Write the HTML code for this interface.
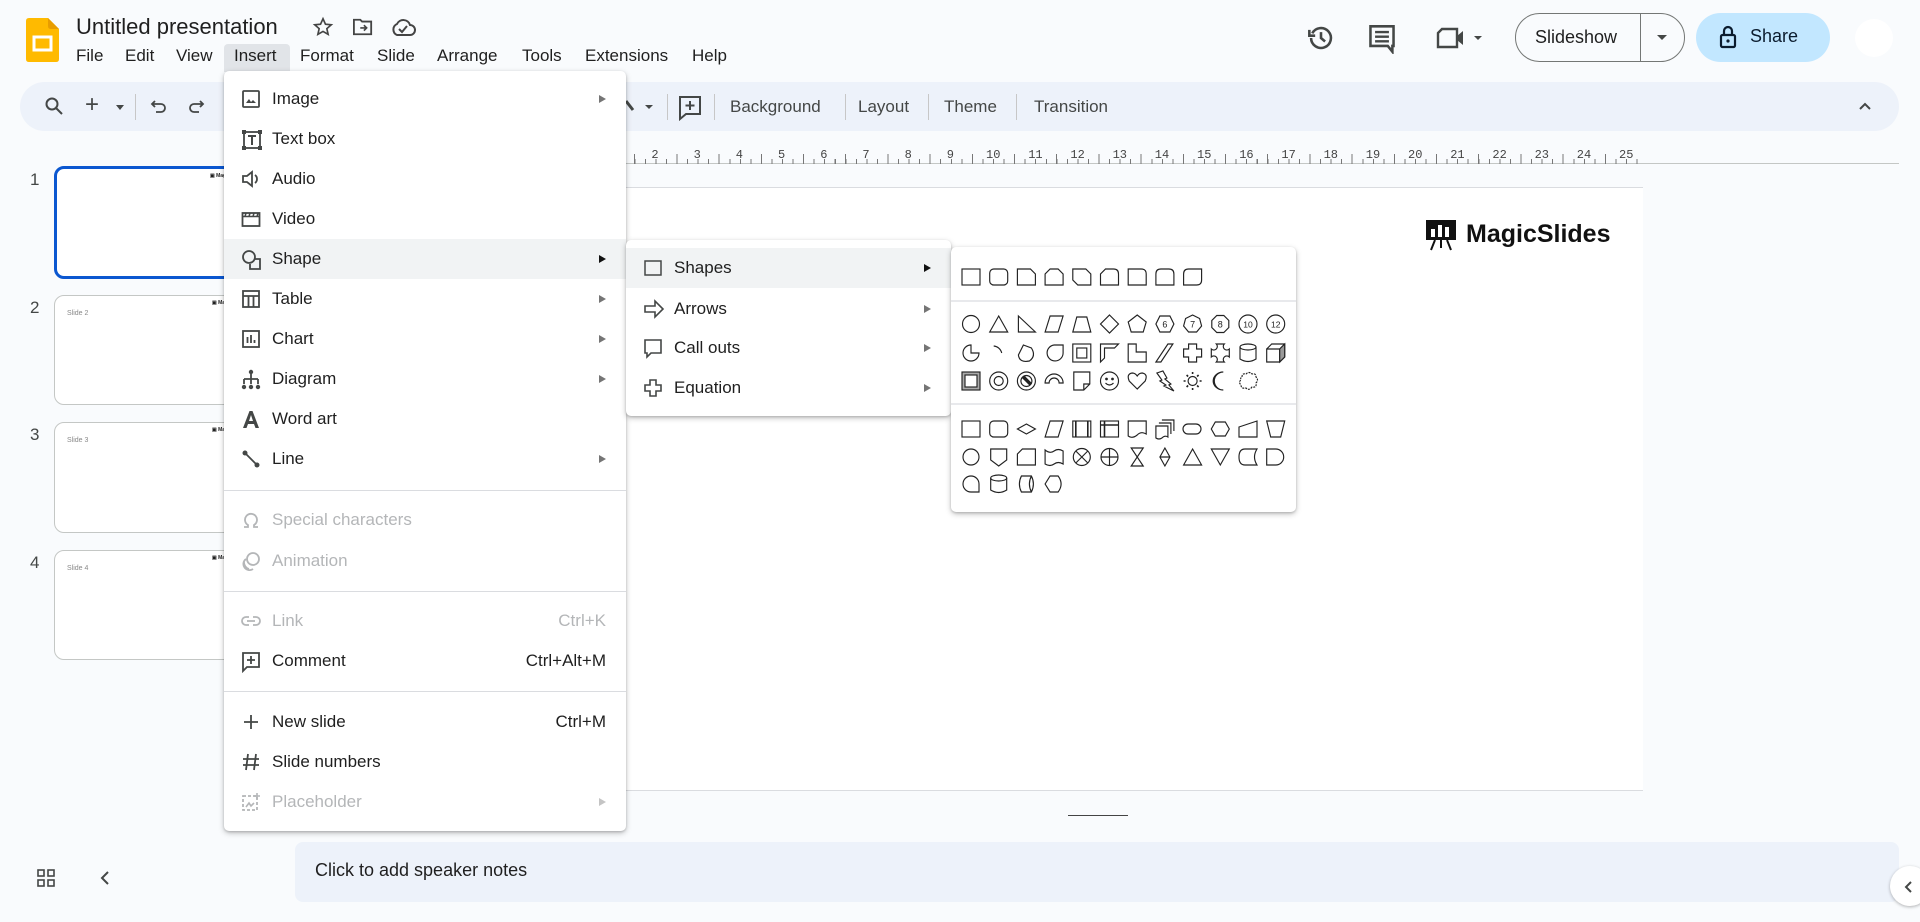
<!DOCTYPE html>
<html><head><meta charset="utf-8">
<style>
*{margin:0;padding:0;box-sizing:border-box}
body{width:1920px;height:922px;background:#f9fbfd;font-family:"Liberation Sans",sans-serif;color:#1f1f1f;position:relative;overflow:hidden}
.a{position:absolute}
.mb{position:absolute;top:46px;font-size:17px;color:#1f1f1f}
.tb{position:absolute;top:97px;font-size:17px;color:#444746}
.sep{position:absolute;top:94px;width:1px;height:26px;background:#c7c7c7}
.menu{position:absolute;background:#fff;border-radius:5px;box-shadow:0 2px 6px rgba(0,0,0,.25),0 1px 2px rgba(0,0,0,.15)}
.it{position:absolute;left:0;right:0;height:40px;font-size:17px;line-height:40px}
.it .t{position:absolute;left:48px}
.it svg{position:absolute;left:17px;top:10px}
.it .ar{position:absolute;right:20px;top:16px;width:0;height:0;border-top:4px solid transparent;border-bottom:4px solid transparent;border-left:7px solid #757575}
.it .sc{position:absolute;right:20px;font-size:17px}
.dis{color:#b4b6b8}
.hr{position:absolute;left:0;right:0;height:1px;background:#dadce0}
.th{position:absolute;left:54px;width:200px;background:#fff;border:1px solid #c4c7c5;border-radius:10px}
.num{position:absolute;left:30px;font-size:17px;color:#444746}
.tl{position:absolute;font-size:7px;color:#888;left:12px;top:14px}
.ml{position:absolute;right:6px;top:4px;font-size:5px;font-weight:bold}
</style></head><body>

<svg class="a" style="left:26px;top:18px" width="33" height="44" viewBox="0 0 33 44"><path d="M3 0H22L33 11V41Q33 44 30 44H3Q0 44 0 41V3Q0 0 3 0Z" fill="#ffba00"/><path d="M22 0L33 11H25Q22 11 22 8Z" fill="#e89d00"/><rect x="8" y="19" width="17" height="13" fill="none" stroke="#fff" stroke-width="3"/></svg>
<div class="a" style="left:76px;top:14px;font-size:22px;color:#1f1f1f">Untitled presentation</div>
<svg class="a" style="left:312px;top:16px" width="22" height="22" viewBox="0 0 24 24"><path d="M12 3l2.7 6 6.3.6-4.8 4.2 1.4 6.2L12 16.8 6.4 20l1.4-6.2L3 9.6 9.3 9z" fill="none" stroke="#444" stroke-width="1.8"/></svg>
<svg class="a" style="left:352px;top:17px" width="22" height="20" viewBox="0 0 24 22"><path d="M2 3h7l2 2h10v14H2z" fill="none" stroke="#444" stroke-width="2"/><path d="M9 12h7M13 9l3 3-3 3" stroke="#444" stroke-width="1.8" fill="none"/></svg>
<svg class="a" style="left:390px;top:16px" width="26" height="22" viewBox="0 0 26 22"><path d="M7 19h13a5 5 0 0 0 0-10 7 7 0 0 0-13-1 6 6 0 0 0 0 11z" fill="none" stroke="#444" stroke-width="2"/><path d="M9 13l3 3 5-6" stroke="#444" stroke-width="2" fill="none"/></svg>

<div class="a" style="left:224px;top:44px;width:66px;height:28px;background:#e1e4e8;border-radius:4px 4px 0 0"></div>
<div class="mb" style="left:76px">File</div><div class="mb" style="left:125px">Edit</div><div class="mb" style="left:176px">View</div><div class="mb" style="left:234px">Insert</div><div class="mb" style="left:300px">Format</div><div class="mb" style="left:377px">Slide</div><div class="mb" style="left:437px">Arrange</div><div class="mb" style="left:522px">Tools</div><div class="mb" style="left:585px">Extensions</div><div class="mb" style="left:692px">Help</div>

<svg class="a" style="left:1307px;top:24px" width="28" height="28" viewBox="0 0 24 24"><path d="M4.5 8A8.5 8.5 0 1 1 3.5 12" fill="none" stroke="#444746" stroke-width="2.2"/><path d="M2 5v5h5" fill="none" stroke="#444746" stroke-width="2.2"/><path d="M12 7v5l3.5 3" fill="none" stroke="#444746" stroke-width="2.2"/></svg>
<svg class="a" style="left:1368px;top:24px" width="28" height="30" viewBox="0 0 24 26"><path d="M2 2h20v17h-1v5l-4-5H2z" fill="none" stroke="#444746" stroke-width="2.2"/><path d="M6 7h12M6 11h12M6 15h12" stroke="#444746" stroke-width="2"/></svg>
<svg class="a" style="left:1436px;top:26px" width="48" height="24" viewBox="0 0 48 24"><path d="M6 3h15v18H2V7z" fill="none" stroke="#444746" stroke-width="2.4"/><path d="M21 10l6-5v14l-6-5z" fill="#444746"/><path d="M38 10h8l-4 4z" fill="#444746"/></svg>
<div class="a" style="left:1515px;top:13px;width:170px;height:49px;border:1px solid #747775;border-radius:25px"></div>
<div class="a" style="left:1640px;top:13px;width:1px;height:49px;background:#747775"></div>
<div class="a" style="left:1535px;top:27px;font-size:18px;color:#1f1f1f">Slideshow</div>
<div class="a" style="left:1657px;top:35px;border-left:5px solid transparent;border-right:5px solid transparent;border-top:5px solid #444746"></div>
<div class="a" style="left:1696px;top:13px;width:134px;height:49px;background:#c2e7ff;border-radius:25px"></div>
<svg class="a" style="left:1719px;top:25px" width="18" height="24" viewBox="0 0 18 24"><rect x="2" y="10" width="14" height="12" rx="1.5" fill="none" stroke="#0b1c2e" stroke-width="2.2"/><path d="M5 10V6a4 4 0 0 1 8 0v4" fill="none" stroke="#0b1c2e" stroke-width="2.2"/><circle cx="9" cy="16" r="1.6" fill="#0b1c2e"/></svg>
<div class="a" style="left:1750px;top:26px;font-size:18px;color:#0b1c2e">Share</div>
<div class="a" style="left:1855px;top:19px;width:38px;height:38px;border-radius:50%;background:#fff"></div>

<div class="a" style="left:20px;top:82px;width:1879px;height:49px;background:#edf2fa;border-radius:25px"></div>
<svg class="a" style="left:44px;top:96px" width="20" height="20" viewBox="0 0 20 20"><circle cx="8" cy="8" r="5.5" fill="none" stroke="#444746" stroke-width="2"/><path d="M12 12l6 6" stroke="#444746" stroke-width="2"/></svg>
<div class="a" style="left:85px;top:91px;font-size:24px;color:#444746">+</div>
<div class="a" style="left:116px;top:105px;border-left:4px solid transparent;border-right:4px solid transparent;border-top:5px solid #444746"></div>
<div class="sep" style="left:135px"></div>
<svg class="a" style="left:150px;top:98px" width="18" height="18" viewBox="0 0 18 18"><path d="M5 3L2 6l3 3M2 6h9a4 4 0 0 1 0 8H6" fill="none" stroke="#444746" stroke-width="1.8"/></svg>
<svg class="a" style="left:187px;top:98px" width="18" height="18" viewBox="0 0 18 18"><path d="M13 3l3 3-3 3M16 6H7a4 4 0 0 0 0 8h5" fill="none" stroke="#444746" stroke-width="1.8"/></svg>
<svg class="a" style="left:620px;top:97px" width="40" height="20" viewBox="0 0 40 20"><path d="M6 4l7 9" stroke="#444746" stroke-width="3"/><path d="M25 8h8l-4 4z" fill="#444746"/></svg>
<div class="sep" style="left:667px"></div>
<svg class="a" style="left:678px;top:95px" width="24" height="26" viewBox="0 0 24 26"><path d="M2 2h20v17H8l-6 5z" fill="none" stroke="#444746" stroke-width="2"/><path d="M12 6v9M7.5 10.5h9" stroke="#444746" stroke-width="2"/></svg>
<div class="sep" style="left:714px"></div>
<div class="tb" style="left:730px">Background</div>
<div class="sep" style="left:845px"></div>
<div class="tb" style="left:858px">Layout</div>
<div class="sep" style="left:928px"></div>
<div class="tb" style="left:944px">Theme</div>
<div class="sep" style="left:1016px"></div>
<div class="tb" style="left:1034px">Transition</div>
<svg class="a" style="left:1857px;top:100px" width="16" height="12" viewBox="0 0 16 12"><path d="M3 9l5-5 5 5" fill="none" stroke="#444746" stroke-width="2"/></svg>

<div class="a" style="left:571px;top:163px;width:1328px;height:1px;background:#c4c7c5"></div>
<div class="a" style="left:571px;top:159px;width:1072px;height:5px;background:repeating-linear-gradient(90deg,#777 0 1px,transparent 1px 10.55px)"></div>
<div class="a" style="left:592px;top:154px;width:1051px;height:10px;background:repeating-linear-gradient(90deg,#777 0 1px,transparent 1px 42.2px)"></div>
<div class="a" style="left:571px;top:148px;width:1080px;height:14px;font-family:'Liberation Mono',monospace;font-size:12px;color:#444">
<script>
for(let n=1;n<=25;n++){document.write('<span style="position:absolute;left:'+(n*42.2-4-(n>9?3:0))+'px;top:0">'+n+'</span>')}
</script>
</div>

<div class="a" style="left:571px;top:187px;width:1072px;height:604px;background:#fff;border-top:1px solid #dadce0;border-bottom:1px solid #dadce0"></div>
<svg class="a" style="left:1425px;top:218px" width="32" height="33" viewBox="0 0 32 33"><rect x="1" y="2" width="30" height="20" fill="#111"/><rect x="6" y="11" width="4" height="8" fill="#fff"/><rect x="13" y="7" width="4" height="12" fill="#fff"/><rect x="20" y="9" width="4" height="10" fill="#fff"/><path d="M10 22l-4 10M22 22l4 10M16 22v8" stroke="#111" stroke-width="2"/></svg>
<div class="a" style="left:1466px;top:220px;font-size:25px;font-weight:bold;color:#111">MagicSlides</div>
<div class="a" style="left:1068px;top:815px;width:60px;height:1px;background:#444"></div>

<div class="num" style="top:170px">1</div>
<div class="th" style="top:166px;height:113px;border:3px solid #0b57d0"><div class="ml">▣ MagicSlides</div></div>
<div class="num" style="top:298px">2</div>
<div class="th" style="top:295px;height:110px"><div class="ml">▣ MagicSlides</div><div class="tl">Slide 2</div></div>
<div class="num" style="top:425px">3</div>
<div class="th" style="top:422px;height:111px"><div class="ml">▣ MagicSlides</div><div class="tl">Slide 3</div></div>
<div class="num" style="top:553px">4</div>
<div class="th" style="top:550px;height:110px"><div class="ml">▣ MagicSlides</div><div class="tl">Slide 4</div></div>

<div class="a" style="left:295px;top:842px;width:1604px;height:60px;background:#edf2fa;border-radius:8px"></div>
<div class="a" style="left:315px;top:860px;font-size:18px;color:#1f1f1f">Click to add speaker notes</div>
<svg class="a" style="left:36px;top:868px" width="20" height="20" viewBox="0 0 20 20" fill="none" stroke="#444746" stroke-width="1.6"><rect x="2" y="2" width="6" height="6"/><rect x="12" y="2" width="6" height="6"/><rect x="2" y="12" width="6" height="6"/><rect x="12" y="12" width="6" height="6"/></svg>
<svg class="a" style="left:98px;top:870px" width="14" height="16" viewBox="0 0 14 16"><path d="M10 2L4 8l6 6" fill="none" stroke="#444746" stroke-width="2"/></svg>
<div class="a" style="left:1890px;top:866px;width:40px;height:40px;border-radius:50%;background:#fff;box-shadow:0 1px 3px rgba(0,0,0,.3)"></div>
<svg class="a" style="left:1903px;top:880px" width="12" height="14" viewBox="0 0 12 14"><path d="M8 2L3 7l5 5" fill="none" stroke="#444746" stroke-width="2"/></svg>

<div class="menu" style="left:224px;top:71px;width:402px;height:760px">
 <div class="it" style="top:8px"><svg width="20" height="20" viewBox="0 0 20 20"><rect x="2" y="2" width="16" height="16" rx="1" fill="none" stroke="#444746" stroke-width="1.8"/><path d="M5 14l3-4 2 3 2-2 3 3z" fill="#444746"/></svg><span class="t">Image</span><span class="ar"></span></div>
 <div class="it" style="top:48px"><svg width="22" height="22" viewBox="0 0 22 22"><rect x="3" y="3" width="16" height="16" fill="none" stroke="#444746" stroke-width="1.8"/><rect x="1" y="1" width="4" height="4" fill="#444746"/><rect x="17" y="1" width="4" height="4" fill="#444746"/><rect x="1" y="17" width="4" height="4" fill="#444746"/><rect x="17" y="17" width="4" height="4" fill="#444746"/><path d="M7 7h8M11 7v9" stroke="#444746" stroke-width="2"/></svg><span class="t">Text box</span></div>
 <div class="it" style="top:88px"><svg width="20" height="20" viewBox="0 0 20 20"><path d="M2 7h4l5-4v14l-5-4H2z" fill="none" stroke="#444746" stroke-width="1.8"/><path d="M14 6a5 5 0 0 1 0 8" fill="none" stroke="#444746" stroke-width="1.8"/></svg><span class="t">Audio</span></div>
 <div class="it" style="top:128px"><svg width="20" height="20" viewBox="0 0 20 20"><rect x="1.5" y="4" width="17" height="13" fill="none" stroke="#444746" stroke-width="1.8"/><path d="M1.5 7.5h17M5 4l-1 3.5M9 4l-1 3.5M13 4l-1 3.5M17 4l-1 3.5" stroke="#444746" stroke-width="1.5"/></svg><span class="t">Video</span></div>
 <div class="it" style="top:168px;background:#f1f3f4"><svg width="22" height="22" viewBox="0 0 22 22"><circle cx="8" cy="8" r="6" fill="none" stroke="#444746" stroke-width="1.8"/><path d="M13 10h6v10H9v-5" fill="none" stroke="#444746" stroke-width="1.8"/></svg><span class="t">Shape</span><span class="ar" style="border-left-color:#111"></span></div>
 <div class="it" style="top:208px"><svg width="20" height="20" viewBox="0 0 20 20"><rect x="2" y="2" width="16" height="16" fill="none" stroke="#444746" stroke-width="1.8"/><path d="M2 7h16M7.5 7v11M12.5 7v11" stroke="#444746" stroke-width="1.8"/></svg><span class="t">Table</span><span class="ar"></span></div>
 <div class="it" style="top:248px"><svg width="20" height="20" viewBox="0 0 20 20"><rect x="2" y="2" width="16" height="16" fill="none" stroke="#444746" stroke-width="1.8"/><path d="M6.5 14V8M10 14V6M13.5 14v-3" stroke="#444746" stroke-width="1.8"/></svg><span class="t">Chart</span><span class="ar"></span></div>
 <div class="it" style="top:288px"><svg width="20" height="22" viewBox="0 0 20 22"><circle cx="10" cy="3" r="2.2" fill="#444746"/><path d="M10 5v5M3 10h14M3 10v5M10 10v5M17 10v5" stroke="#444746" stroke-width="1.8" fill="none"/><circle cx="3" cy="18" r="2.2" fill="#444746"/><circle cx="10" cy="18" r="2.2" fill="#444746"/><circle cx="17" cy="18" r="2.2" fill="#444746"/></svg><span class="t">Diagram</span><span class="ar"></span></div>
 <div class="it" style="top:328px"><svg width="20" height="20" viewBox="0 0 20 20"><path d="M2 19L8.5 2h3L18 19h-3.5l-1.5-4H7l-1.5 4z M8 12h4l-2-6z" fill="#444746" fill-rule="evenodd"/></svg><span class="t">Word art</span></div>
 <div class="it" style="top:368px"><svg width="20" height="20" viewBox="0 0 20 20"><path d="M4 4l12 12" stroke="#444746" stroke-width="1.8"/><circle cx="4" cy="4" r="2.5" fill="#444746"/><circle cx="16" cy="16" r="2.5" fill="#444746"/></svg><span class="t">Line</span><span class="ar"></span></div>
 <div class="hr" style="top:419px"></div>
 <div class="it dis" style="top:429px"><svg width="20" height="20" viewBox="0 0 20 20"><path d="M3 17h4v-2a6 6 0 1 1 6 0v2h4" fill="none" stroke="#b4b6b8" stroke-width="1.8"/></svg><span class="t">Special characters</span></div>
 <div class="it dis" style="top:470px"><svg width="20" height="20" viewBox="0 0 20 20"><circle cx="12" cy="8" r="6" fill="none" stroke="#b4b6b8" stroke-width="1.8"/><path d="M5 8a6 6 0 0 0 7 10M3 11a7 7 0 0 0 5 7" fill="none" stroke="#b4b6b8" stroke-width="1.8"/></svg><span class="t">Animation</span></div>
 <div class="hr" style="top:520px"></div>
 <div class="it dis" style="top:530px"><svg width="20" height="20" viewBox="0 0 20 20"><path d="M8 6H5a4 4 0 0 0 0 8h3M12 6h3a4 4 0 0 1 0 8h-3M6 10h8" fill="none" stroke="#b4b6b8" stroke-width="1.8"/></svg><span class="t">Link</span><span class="sc">Ctrl+K</span></div>
 <div class="it" style="top:570px"><svg width="20" height="22" viewBox="0 0 20 22"><path d="M2 2h16v14H6l-4 4z" fill="none" stroke="#444746" stroke-width="1.8"/><path d="M10 5v8M6 9h8" stroke="#444746" stroke-width="1.8"/></svg><span class="t">Comment</span><span class="sc">Ctrl+Alt+M</span></div>
 <div class="hr" style="top:620px"></div>
 <div class="it" style="top:631px"><svg width="20" height="20" viewBox="0 0 20 20"><path d="M10 3v14M3 10h14" stroke="#444746" stroke-width="1.8"/></svg><span class="t">New slide</span><span class="sc">Ctrl+M</span></div>
 <div class="it" style="top:671px"><svg width="20" height="20" viewBox="0 0 20 20"><path d="M7 2L5 18M15 2l-2 16M2 7h16M2 13h16" stroke="#444746" stroke-width="1.8"/></svg><span class="t">Slide numbers</span></div>
 <div class="it dis" style="top:711px"><svg width="20" height="20" viewBox="0 0 20 20"><rect x="2" y="4" width="14" height="14" fill="none" stroke="#b4b6b8" stroke-width="1.8" stroke-dasharray="3 2"/><path d="M5 15l3-4 2 3 3-3" stroke="#b4b6b8" stroke-width="1.6" fill="none"/><path d="M16 1v6M13 4h6" stroke="#b4b6b8" stroke-width="1.6"/></svg><span class="t">Placeholder</span><span class="ar" style="border-left-color:#c4c4c4"></span></div>
</div>

<div class="menu" style="left:626px;top:240px;width:325px;height:176px">
 <div class="it" style="top:8px;background:#f1f3f4"><svg width="20" height="20" viewBox="0 0 20 20"><rect x="2" y="3" width="16" height="14" fill="none" stroke="#444746" stroke-width="1.5"/></svg><span class="t">Shapes</span><span class="ar" style="border-left-color:#111"></span></div>
 <div class="it" style="top:49px"><svg width="22" height="20" viewBox="0 0 22 20"><path d="M2 7h10V2l8 8-8 8v-5H2z" fill="none" stroke="#444746" stroke-width="1.6"/></svg><span class="t">Arrows</span><span class="ar"></span></div>
 <div class="it" style="top:88px"><svg width="20" height="22" viewBox="0 0 20 22"><path d="M2 2h16v13H8l-4 4v-4H2z" fill="none" stroke="#444746" stroke-width="1.6"/></svg><span class="t">Call outs</span><span class="ar"></span></div>
 <div class="it" style="top:128px"><svg width="20" height="20" viewBox="0 0 20 20"><path d="M7 2h6v5h5v6h-5v5H7v-5H2V7h5z" fill="none" stroke="#444746" stroke-width="1.6"/></svg><span class="t">Equation</span><span class="ar"></span></div>
</div>

<div class="menu" style="left:951px;top:247px;width:345px;height:265px"></div>
<svg class="a" style="left:951px;top:247px" width="345" height="265" viewBox="0 0 345 265">
<g fill="none" stroke="#222" stroke-width="1.15">
<line x1="0" y1="54" x2="345" y2="54" stroke="#dadce0"/>
<line x1="0" y1="157" x2="345" y2="157" stroke="#dadce0"/>
<g transform="translate(9,19)">
<rect x="2" y="3" width="18" height="16"/>
<rect x="29.7" y="3" width="18" height="16" rx="4"/>
<path transform="translate(55.4,0)" d="M2 3H15L20 8V19H2Z"/>
<path transform="translate(83.1,0)" d="M7 3H15L20 8V19H2V8Z"/>
<path transform="translate(110.8,0)" d="M2 3H15L20 8V19H7L2 14Z"/>
<path transform="translate(138.5,0)" d="M7 3H15Q20 3 20 8V19H2V8Z"/>
<path transform="translate(166.2,0)" d="M2 3H15Q20 3 20 8V19H2Z"/>
<path transform="translate(193.9,0)" d="M7 3H15Q20 3 20 8V19H2V8Q2 3 7 3Z"/>
<path transform="translate(221.6,0)" d="M7 3H20V14Q20 19 15 19H2V8Q2 3 7 3Z"/>
</g>
<g transform="translate(9,66)">
<circle cx="11" cy="11" r="8.5"/>
<path transform="translate(27.7,0)" d="M11 3L20 19H2Z"/>
<path transform="translate(55.4,0)" d="M3 3L20 19H3Z"/>
<path transform="translate(83.1,0)" d="M7 3H20L15 19H2Z"/>
<path transform="translate(110.8,0)" d="M6 4H16L20 19H2Z"/>
<path transform="translate(138.5,0)" d="M11 2L20 11L11 20L2 11Z"/>
<path transform="translate(166.2,0)" d="M11 2L20 9L17 19H5L2 9Z"/>
<g transform="translate(193.9,0)"><path d="M6 3H16L20 11L16 19H6L2 11Z"/><text x="11" y="14.5" font-size="9" text-anchor="middle" stroke="none" fill="#222" font-family="Liberation Sans">6</text></g>
<g transform="translate(221.6,0)"><path d="M11 2L18 5.5L20 13L15 19H7L2 13L4 5.5Z"/><text x="11" y="14.5" font-size="9" text-anchor="middle" stroke="none" fill="#222" font-family="Liberation Sans">7</text></g>
<g transform="translate(249.3,0)"><path d="M7.5 2.5H14.5L19.5 7.5V14.5L14.5 19.5H7.5L2.5 14.5V7.5Z"/><text x="11" y="14.5" font-size="9" text-anchor="middle" stroke="none" fill="#222" font-family="Liberation Sans">8</text></g>
<g transform="translate(277,0)"><circle cx="11" cy="11" r="9"/><text x="11" y="14.5" font-size="8.5" text-anchor="middle" stroke="none" fill="#222" font-family="Liberation Sans">10</text></g>
<g transform="translate(304.7,0)"><circle cx="11" cy="11" r="9"/><text x="11" y="14.5" font-size="8.5" text-anchor="middle" stroke="none" fill="#222" font-family="Liberation Sans">12</text></g>
</g>
<g transform="translate(9,95)">
<path d="M11 3A8 8 0 1 0 19 11H11Z"/>
<path transform="translate(27.7,0)" d="M6 4A9 9 0 0 1 14 11"/>
<path transform="translate(55.4,0)" d="M8 3L16 6Q21 14 14 19Q4 21 3 13Z"/>
<path transform="translate(83.1,0)" d="M11 3H20V11A8 8 0 1 1 11 3Z"/>
<g transform="translate(110.8,0)"><rect x="2" y="2" width="18" height="18"/><rect x="6" y="6" width="10" height="10"/></g>
<path transform="translate(138.5,0)" d="M2 2H20L16 6H6V16L2 20Z"/>
<path transform="translate(166.2,0)" d="M2 2H10V10H20V20H2Z"/>
<path transform="translate(193.9,0)" d="M14 2H19L7 20H2Z"/>
<path transform="translate(221.6,0)" d="M7 2H15V7H20V15H15V20H7V15H2V7H7Z"/>
<path transform="translate(249.3,0)" d="M7 2H15A3 3 0 0 0 20 7V15A3 3 0 0 0 15 20H7A3 3 0 0 0 2 15V7A3 3 0 0 0 7 2Z"/>
<g transform="translate(277,0)"><path d="M3 5V17Q11 22 19 17V5"/><ellipse cx="11" cy="5" rx="8" ry="3"/></g>
<g transform="translate(304.7,0)"><path d="M2 7H15V20H2Z M2 7L7 2H20V15L15 20 M15 7L20 2"/><path d="M15 7L20 2V15L15 20Z" fill="#999"/></g>
</g>
<g transform="translate(9,123)">
<g><rect x="2" y="2" width="18" height="18" fill="#aaa"/><rect x="5" y="5" width="12" height="12" fill="#fff"/></g>
<g transform="translate(27.7,0)"><circle cx="11" cy="11" r="9"/><circle cx="11" cy="11" r="4.5"/></g>
<g transform="translate(55.4,0)"><circle cx="11" cy="11" r="9"/><circle cx="11" cy="11" r="5.5"/><path d="M7 7L15 15M8 6L16 14" stroke-width="2"/></g>
<path transform="translate(83.1,0)" d="M2 13A9 9 0 0 1 20 13H16A5 5 0 0 0 6 13Z"/>
<path transform="translate(110.8,0)" d="M3 2H19V14L13 20H3Z M13 20V14H19"/>
<g transform="translate(138.5,0)"><circle cx="11" cy="11" r="9"/><circle cx="8" cy="9" r=".8" fill="#222"/><circle cx="14" cy="9" r=".8" fill="#222"/><path d="M7 13Q11 17 15 13"/></g>
<path transform="translate(166.2,0)" d="M11 19L3 11Q0 4 6 3Q9 3 11 6Q13 3 16 3Q22 4 19 11Z"/>
<path transform="translate(193.9,0)" d="M3 3L9 1L13 8L11 9L17 14L15 15L20 21L10 16L12 15L6 11L8 10Z"/>
<g transform="translate(221.6,0)"><circle cx="11" cy="11" r="4.5"/><path d="M11 2V4M11 18V20M2 11H4M18 11H20M5 5L6.5 6.5M15.5 15.5L17 17M17 5L15.5 6.5M5 17L6.5 15.5" stroke-width="1.6"/></g>
<path transform="translate(249.3,0)" d="M14 2A9 9 0 0 0 14 20A9 8 0 0 1 14 2Z"/>
<path transform="translate(277,0)" d="M5 7Q5 3 9 4Q12 1 15 4Q19 3 19 7Q22 10 19 13Q20 18 15 17Q12 21 9 18Q4 19 4 15Q1 12 4 10Q3 8 5 7Z" stroke-dasharray="2 1"/>
</g>
<g transform="translate(9,171)">
<rect x="2" y="3" width="18" height="16"/>
<rect x="29.7" y="3" width="18" height="16" rx="4"/>
<path transform="translate(55.4,0)" d="M11 6L20 11L11 16L2 11Z"/>
<path transform="translate(83.1,0)" d="M7 3H20L15 19H2Z"/>
<g transform="translate(110.8,0)"><rect x="2" y="3" width="18" height="16"/><path d="M5 3V19M17 3V19" stroke-width="1.6"/></g>
<g transform="translate(138.5,0)"><rect x="2" y="3" width="18" height="16"/><path d="M6 3V19M2 7H20" stroke-width="1.6"/></g>
<path transform="translate(166.2,0)" d="M2 3H20V16Q15 13 11 17Q6 21 2 18Z"/>
<g transform="translate(193.9,0)"><path d="M8 2H20V13M5 5H17V16"/><path d="M2 8H14V19Q11 17 8 20Q5 22 2 20Z"/></g>
<rect x="223" y="6" width="18" height="10" rx="5"/>
<path transform="translate(249.3,0)" d="M6 4H16L20 11L16 18H6L2 11Z"/>
<path transform="translate(277,0)" d="M2 9L20 3V19H2Z"/>
<path transform="translate(304.7,0)" d="M2 3H20L16 19H6Z"/>
</g>
<g transform="translate(9,199)">
<circle cx="11" cy="11" r="8"/>
<path transform="translate(27.7,0)" d="M3 3H19V14L11 20L3 14Z"/>
<path transform="translate(55.4,0)" d="M7 3H20V19H2V8Z"/>
<path transform="translate(83.1,0)" d="M2 4Q7 8 11 5Q15 2 20 5V18Q15 15 11 18Q7 21 2 18Z"/>
<g transform="translate(110.8,0)"><circle cx="11" cy="11" r="8.5"/><path d="M5 5L17 17M17 5L5 17"/></g>
<g transform="translate(138.5,0)"><circle cx="11" cy="11" r="8.5"/><path d="M11 2.5V19.5M2.5 11H19.5"/></g>
<path transform="translate(166.2,0)" d="M5 2H17L5 20H17Z"/>
<path transform="translate(193.9,0)" d="M11 2L16 11L11 20L6 11Z M6 11H16"/>
<path transform="translate(221.6,0)" d="M11 3L20 19H2Z"/>
<path transform="translate(249.3,0)" d="M2 3H20L11 19Z"/>
<path transform="translate(277,0)" d="M8 3H20Q15 11 20 19H8Q2 19 2 11Q2 3 8 3Z"/>
<path transform="translate(304.7,0)" d="M2 3H11A8 8 0 0 1 11 19H2Z"/>
</g>
<g transform="translate(9,226)">
<path d="M11 19A8 8 0 1 1 19 11V19Z"/>
<g transform="translate(27.7,0)"><path d="M3 5V17Q11 22 19 17V5"/><ellipse cx="11" cy="5" rx="8" ry="3"/></g>
<g transform="translate(55.4,0)"><path d="M6 3H16Q20 11 16 19H6Q2 11 6 3Z"/><path d="M16 3Q12 11 16 19"/></g>
<path transform="translate(83.1,0)" d="M7 3H15Q21 11 15 19H7L2 11Z"/>
</g>
</g>
</svg>

</body></html>
